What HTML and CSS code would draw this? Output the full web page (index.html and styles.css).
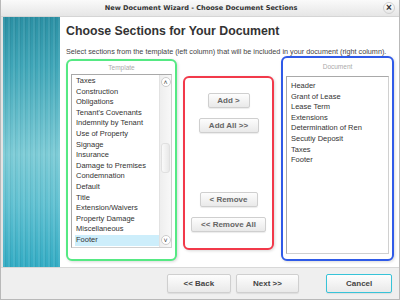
FILE: index.html
```html
<!DOCTYPE html>
<html lang="en">
<head>
  <meta charset="UTF-8">
  <title>New Document Wizard</title>
  <link rel="stylesheet" href="styles.css">
</head>
<body>
  <div class="window">
    <div class="titlebar">
      <span class="title">New Document Wizard - Choose Document Sections</span>
      <span class="close">&#215;</span>
    </div>

    <div class="main">
      <div class="sidebar"></div>
      <div class="content">
        <h2>Choose Sections for Your Document</h2>
        <p class="intro">Select sections from the template (left column) that will be included in your document (right column).</p>

        <div class="columns">
          <div class="group group-template">
            <div class="group-label">Template</div>
            <div class="listbox">
              <ul class="items">
                <li>Taxes</li>
                <li>Construction</li>
                <li>Obligations</li>
                <li>Tenant's Covenants</li>
                <li>Indemnity by Tenant</li>
                <li>Use of Property</li>
                <li>Signage</li>
                <li>Insurance</li>
                <li>Damage to Premises</li>
                <li>Condemnation</li>
                <li>Default</li>
                <li>Title</li>
                <li>Extension/Waivers</li>
                <li>Property Damage</li>
                <li>Miscellaneous</li>
                <li class="selected">Footer</li>
              </ul>
              <div class="scrollbar">
                <span class="arrow">&#708;</span>
                <span class="thumb"></span>
                <span class="arrow">&#709;</span>
              </div>
            </div>
          </div>

          <div class="group group-actions">
            <div class="action-top">
              <button class="btn btn-add">Add &gt;</button>
              <button class="btn btn-addall">Add All &gt;&gt;</button>
            </div>
            <div class="action-bottom">
              <button class="btn btn-remove">&lt; Remove</button>
              <button class="btn btn-removeall">&lt;&lt; Remove All</button>
            </div>
          </div>

          <div class="group group-document">
            <div class="group-label">Document</div>
            <div class="listbox">
              <ul class="items">
                <li>Header</li>
                <li>Grant of Lease</li>
                <li>Lease Term</li>
                <li>Extensions</li>
                <li>Determination of Ren</li>
                <li>Secutiy Deposit</li>
                <li>Taxes</li>
                <li>Footer</li>
              </ul>
            </div>
          </div>
        </div>
      </div>
    </div>

    <div class="footer">
      <button class="btn nav-btn">&lt;&lt; Back</button>
      <button class="btn nav-btn">Next &gt;&gt;</button>
      <button class="btn nav-btn btn-cancel">Cancel</button>
    </div>
  </div>
</body>
</html>
```

FILE: styles.css
```css
body {
  margin: 0;
  padding: 0;
  font-family: "Liberation Sans", Arial, sans-serif;
  background-color: #fff;
}

.window {
  width: 400px;
  height: 300px;
  box-sizing: border-box;
  border: 1px solid #b9b9b9;
  border-top: none;
  background-color: #fff;
  display: flex;
  flex-direction: column;
  overflow: hidden;
}

.titlebar {
  height: 16px;
  position: relative;
  display: flex;
  justify-content: center;
  align-items: center;
  background: linear-gradient(#fafafa, #e6e6e6);
  border-bottom: 1px solid #d5d5d5;
}

.title {
  font-family: "DejaVu Sans", Verdana, sans-serif;
  font-size: 6.6px;
  font-weight: bold;
  color: #333;
  margin-left: 2px;
}

.close {
  position: absolute;
  right: 4px;
  top: 2px;
  width: 12px;
  height: 12px;
  border-radius: 50%;
  border: 1px solid #d0d0d0;
  background: linear-gradient(#ffffff, #e8e8e8);
  box-sizing: border-box;
  font-size: 10px;
  font-weight: bold;
  line-height: 10px;
  text-align: center;
  color: #333;
}

.main {
  display: flex;
  height: 250px;
  border-left: 2px solid #e4e4e4;
}

.sidebar {
  width: 57px;
  flex-shrink: 0;
  background:
    repeating-linear-gradient(90deg, rgba(255, 255, 255, 0.08) 0 2px, rgba(0, 0, 0, 0.05) 2px 3px, rgba(255, 255, 255, 0) 3px 5px),
    linear-gradient(#2a8fa3 0%, #3fa6b8 20%, #7ccbd6 55%, #5fc0d1 75%, #32abc3 100%);
}

.content {
  flex: 1;
  padding: 0 0 0 6px;
  display: flex;
  flex-direction: column;
}

h2 {
  margin: 6px 0 0 0;
  font-size: 12.3px;
  line-height: 16px;
  color: #333;
}

.intro {
  margin: 8px 0 0 0;
  font-size: 7.25px;
  line-height: 9px;
  color: #444;
}

.columns {
  display: flex;
  margin-top: 0;
}

.group {
  box-sizing: border-box;
  border-radius: 6px;
  background-color: #fff;
  box-shadow: 1px 1px 3px rgba(0, 0, 0, 0.15);
}

.group-template {
  width: 111px;
  height: 202px;
  margin-top: 3px;
  border: 2px solid #55e983;
  padding: 0 3px;
}

.group-actions {
  width: 91px;
  height: 174px;
  margin: 20px 0 0 6px;
  border: 2px solid #f2394a;
  display: flex;
  flex-direction: column;
  align-items: center;
  justify-content: space-between;
  padding: 15px 0 16px 0;
}

.group-document {
  width: 113px;
  height: 205px;
  margin-left: 7px;
  border: 2px solid #2f5ae8;
  padding: 0 3px;
}

.group-label {
  text-align: center;
  font-size: 6.5px;
  line-height: 13px;
  color: #aaa;
}

.group-document .group-label {
  line-height: 18px;
}

.listbox {
  box-sizing: border-box;
  border: 1px solid #a9a9a9;
  border-right-color: #d0d0d0;
  border-bottom-color: #d0d0d0;
  display: flex;
  background-color: #fff;
}

.group-template .listbox {
  height: 174px;
}

.group-document .listbox {
  height: 178px;
}

.items {
  list-style: none;
  margin: 0;
  padding: 1px 0 0 3px;
  flex: 1;
}

.items li {
  font-size: 7.5px;
  line-height: 10.6px;
  color: #333;
  padding-left: 1px;
  white-space: nowrap;
}

.group-document .items {
  padding-top: 4px;
}

.items li.selected {
  background-color: #cdeefb;
}

.scrollbar {
  width: 11px;
  display: flex;
  flex-direction: column;
  align-items: center;
  background: linear-gradient(90deg, #eeeeee, #f8f8f8);
  border-left: 1px solid #e2e2e2;
}

.arrow {
  width: 8px;
  height: 8px;
  margin: 2px 0;
  border-radius: 50%;
  background-color: #fff;
  border: 1px solid #ccc;
  font-size: 7px;
  line-height: 10px;
  text-align: center;
  color: #444;
}

.thumb {
  flex: 1;
  width: 9px;
  margin: 54px 0 60px 0;
  border-radius: 3px;
  background: linear-gradient(90deg, #fafafa, #e8e8e8);
  border: 1px solid #e0e0e0;
  box-sizing: border-box;
}

.btn {
  font-family: "Liberation Sans", Arial, sans-serif;
  font-size: 8px;
  font-weight: bold;
  color: #666;
  background: linear-gradient(#fdfdfd, #e9e9e9);
  border: 1px solid #cfcfcf;
  border-radius: 2px;
  box-shadow: 0 1px 1px rgba(0, 0, 0, 0.08);
  height: 15px;
  padding: 0;
}

.action-top,
.action-bottom {
  display: flex;
  flex-direction: column;
  align-items: center;
  gap: 10px;
}

.btn-add {
  width: 42px;
}

.btn-addall {
  width: 60px;
}

.btn-remove {
  width: 58px;
}

.btn-removeall {
  width: 75px;
}

.footer {
  flex: 1;
  display: flex;
  align-items: center;
  padding: 0 7px 0 166px;
  gap: 5px;
  background-color: #efefef;
  border-top: 1px solid #d8d8d8;
}

.nav-btn {
  width: 64px;
  height: 19px;
  color: #444;
}

.btn-cancel {
  margin-left: 22px;
  width: 66px;
  border: 1px solid #37c3d8;
}
```
